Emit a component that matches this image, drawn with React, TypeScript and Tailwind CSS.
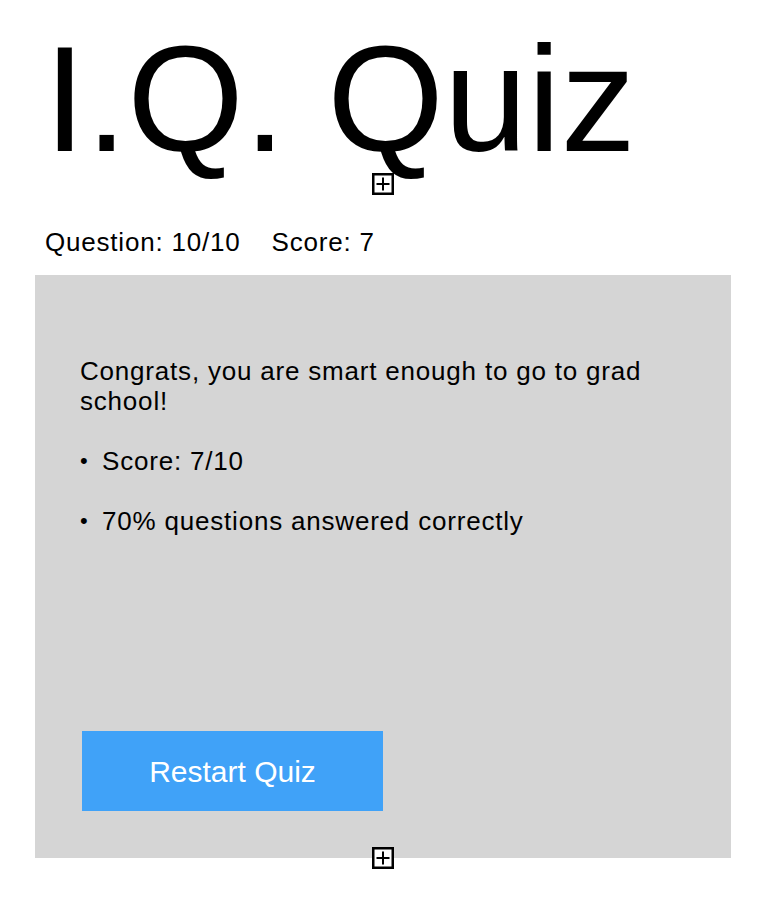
import React from 'react';

const PlusBox: React.FC<{ className?: string }> = ({ className }) => (
  <svg width="22" height="22" viewBox="0 0 22 22" className={className}>
    <rect x="1.25" y="1.25" width="19.5" height="19.5" fill="white" stroke="black" strokeWidth="2.5" />
    <path d="M11 4.5v13M4.5 11h13" stroke="black" strokeWidth="2" />
  </svg>
);

const App: React.FC = () => {
  const score = 7;
  const total = 10;
  const percent = Math.round((score / total) * 100);

  return (
    <div className="min-h-[914px] bg-white font-['Liberation_Sans',Arial,sans-serif] text-black">
      <div className="ml-[35px] w-[696px] flex flex-col">
        <h1 className="pt-[26px] pl-[9px] text-[150px] leading-[147px] font-normal">I.Q. Quiz</h1>
        <PlusBox className="self-center" />

        <div className="mt-[33px] pl-[10px] flex gap-[31px] text-[26px] leading-[28px] tracking-[0.8px]">
          <span>Question: {total}/{total}</span>
          <span>Score: {score}</span>
        </div>

        <div className="mt-[19px] h-[583px] bg-[#d5d5d5] pt-[81px] pl-[45px] pr-[45px] flex flex-col">
          <div className="flex flex-col gap-[30px] text-[26px] leading-[30px] tracking-[0.8px]">
            <p>Congrats, you are smart enough to go to grad school!</p>
            <ul className="flex flex-col gap-[30px]">
              <li className="flex">
                <span className="w-[22px] shrink-0 text-[22px]">•</span>
                <span>Score: {score}/{total}</span>
              </li>
              <li className="flex">
                <span className="w-[22px] shrink-0 text-[22px]">•</span>
                <span>{percent}% questions answered correctly</span>
              </li>
            </ul>
          </div>
          <button className="mt-[195px] ml-[2px] w-[301px] h-[80px] bg-[#40a2f8] text-white text-[30px] flex items-center justify-center">
            Restart Quiz
          </button>
        </div>
        <PlusBox className="self-center -mt-[11px]" />
      </div>
    </div>
  );
};

export default App;
